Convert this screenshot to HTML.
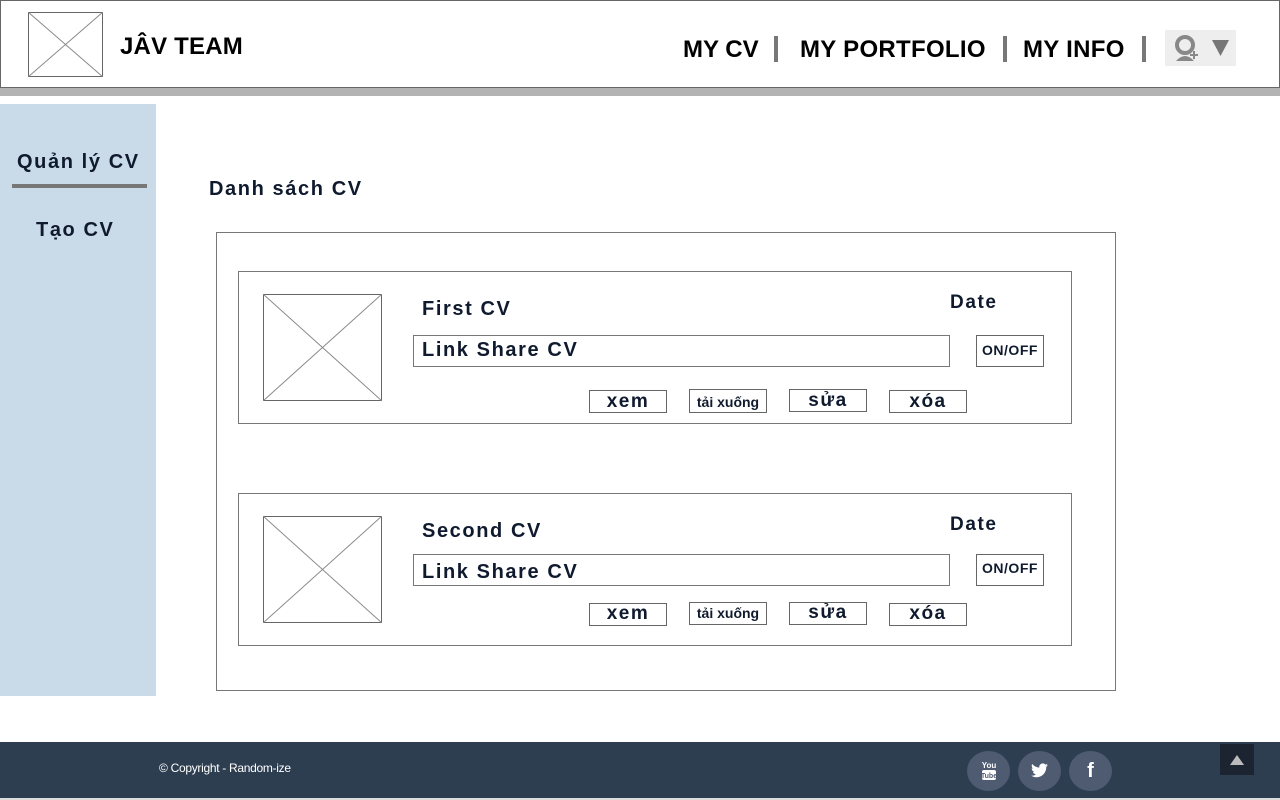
<!DOCTYPE html>
<html><head><meta charset="utf-8"><style>
*{margin:0;padding:0;box-sizing:border-box}
body{width:1280px;height:800px;position:relative;background:#fff;font-family:"Liberation Sans",sans-serif;overflow:hidden;color:#0f1a2e}
.a{position:absolute}
.hdr{left:0;top:0;width:1280px;height:88px;border:1px solid #666;background:#fff}
.bar{left:0;top:88px;width:1280px;height:8px;background:#b3b3b3}
.nav{font-weight:bold;font-size:24px;color:#000;top:36px}
.sep{width:4px;height:26px;background:#777;top:36px}
.side{left:0;top:104px;width:156px;height:592px;background:#c9dae8}
.t{font-weight:bold;letter-spacing:1.6px;color:#0f1a2e}
.box{border:1px solid #777}
.btn{border:1px solid #666;font-weight:bold;text-align:center;color:#0f1a2e}
.soc{width:43px;height:40px;border-radius:50%;background:#4f5b70;top:751px}
</style></head><body>
<div class="a hdr"></div>
<div class="a bar"></div>
<svg class="a" style="left:28px;top:12px" width="75" height="65"><rect x="0.5" y="0.5" width="74" height="64" fill="#fff" stroke="#666"/><line x1="0" y1="0" x2="75" y2="65" stroke="#888"/><line x1="75" y1="0" x2="0" y2="65" stroke="#888"/></svg>
<div class="a" style="left:120px;top:33px;font-weight:bold;font-size:24px;color:#000;letter-spacing:.2px">JÂV TEAM</div>
<div class="a nav" style="left:683px">MY CV</div>
<div class="a sep" style="left:774px"></div>
<div class="a nav" style="left:800px;letter-spacing:.3px">MY PORTFOLIO</div>
<div class="a sep" style="left:1003px"></div>
<div class="a nav" style="left:1023px;letter-spacing:.3px">MY INFO</div>
<div class="a sep" style="left:1142px"></div>
<div class="a" style="left:1165px;top:30px;width:71px;height:36px;background:#eee"></div>
<svg class="a" style="left:1170px;top:33px" width="66" height="30"><circle cx="15" cy="12" r="8" fill="none" stroke="#888" stroke-width="4"/><path d="M6 28 Q15 18 24 28Z" fill="#888"/><path d="M20 22h8M24 18v8" stroke="#888" stroke-width="2"/><path d="M42 7h17l-8.5 16z" fill="#777"/></svg>
<div class="a side"></div>
<div class="a t" style="left:17px;top:151px;font-size:20px">Quản lý CV</div>
<div class="a" style="left:12px;top:184px;width:135px;height:4px;background:#777"></div>
<div class="a t" style="left:36px;top:219px;font-size:20px">Tạo CV</div>
<div class="a t" style="left:209px;top:178px;font-size:20px">Danh sách CV</div>
<div class="a box" style="left:216px;top:232px;width:900px;height:459px"></div>

<div class="a box" style="left:238px;top:271px;width:834px;height:153px"></div>
<svg class="a" style="left:263px;top:294px" width="119" height="107"><rect x="0.5" y="0.5" width="118" height="106" fill="#fff" stroke="#666"/><line x1="0" y1="0" x2="119" y2="107" stroke="#888"/><line x1="119" y1="0" x2="0" y2="107" stroke="#888"/></svg>
<div class="a t" style="left:422px;top:298px;font-size:20px">First CV</div>
<div class="a t" style="left:950px;top:292px;font-size:19px">Date</div>
<div class="a box" style="left:413px;top:335px;width:537px;height:32px"></div>
<div class="a t" style="left:422px;top:339px;font-size:20px">Link Share CV</div>
<div class="a btn" style="left:976px;top:335px;width:68px;height:32px;font-size:14px;line-height:28px;letter-spacing:.5px">ON/OFF</div>
<div class="a btn" style="left:589px;top:390px;width:78px;height:23px;font-size:19px;line-height:22px;letter-spacing:1.5px">xem</div>
<div class="a btn" style="left:689px;top:389px;width:78px;height:24px;font-size:14px;line-height:24px">tải xuống</div>
<div class="a btn" style="left:789px;top:389px;width:78px;height:23px;font-size:19px;line-height:22px;letter-spacing:1.5px">sửa</div>
<div class="a btn" style="left:889px;top:390px;width:78px;height:23px;font-size:19px;line-height:22px;letter-spacing:1.5px">xóa</div>

<div class="a box" style="left:238px;top:493px;width:834px;height:153px"></div>
<svg class="a" style="left:263px;top:516px" width="119" height="107"><rect x="0.5" y="0.5" width="118" height="106" fill="#fff" stroke="#666"/><line x1="0" y1="0" x2="119" y2="107" stroke="#888"/><line x1="119" y1="0" x2="0" y2="107" stroke="#888"/></svg>
<div class="a t" style="left:422px;top:520px;font-size:20px">Second CV</div>
<div class="a t" style="left:950px;top:514px;font-size:19px">Date</div>
<div class="a box" style="left:413px;top:554px;width:537px;height:32px"></div>
<div class="a t" style="left:422px;top:561px;font-size:20px">Link Share CV</div>
<div class="a btn" style="left:976px;top:554px;width:68px;height:32px;font-size:14px;line-height:26px;letter-spacing:.5px">ON/OFF</div>
<div class="a btn" style="left:589px;top:603px;width:78px;height:23px;font-size:19px;line-height:20px;letter-spacing:1.5px">xem</div>
<div class="a btn" style="left:689px;top:602px;width:78px;height:23px;font-size:14px;line-height:21px">tải xuống</div>
<div class="a btn" style="left:789px;top:602px;width:78px;height:23px;font-size:19px;line-height:20px;letter-spacing:1.5px">sửa</div>
<div class="a btn" style="left:889px;top:603px;width:78px;height:23px;font-size:19px;line-height:20px;letter-spacing:1.5px">xóa</div>

<div class="a" style="left:0;top:742px;width:1280px;height:56px;background:#2e3e51"></div>
<div class="a" style="left:0;top:798px;width:1280px;height:2px;background:#ddd"></div>
<div class="a" style="left:159px;top:761px;color:#fff;font-size:12px;letter-spacing:-.3px">© Copyright - Random-ize</div>
<div class="a soc" style="left:967px"></div>
<svg class="a" style="left:980px;top:760px" width="18" height="22"><text x="9" y="8" font-size="8" font-weight="bold" fill="#fff" text-anchor="middle" font-family="Liberation Sans">You</text><rect x="2" y="10" width="14" height="10" rx="2" fill="#fff"/><text x="9" y="18" font-size="7" font-weight="bold" fill="#4f5b70" text-anchor="middle" font-family="Liberation Sans">Tube</text></svg>
<div class="a soc" style="left:1018px"></div>
<svg class="a" style="left:1031px;top:763px" width="17" height="15" viewBox="0 0 24 20"><path d="M24 2.4a10 10 0 0 1-2.8.8A5 5 0 0 0 23.3.5a10 10 0 0 1-3.1 1.2A4.9 4.9 0 0 0 11.8 6 14 14 0 0 1 1.7.9a4.9 4.9 0 0 0 1.5 6.6 5 5 0 0 1-2.2-.6 4.9 4.9 0 0 0 3.9 4.9 5 5 0 0 1-2.2.1 4.9 4.9 0 0 0 4.6 3.4A9.900 9.900 0 0 1 0 17.3 14 14 0 0 0 7.5 19.5c9 0 14-7.5 14-14v-.6A10 10 0 0 0 24 2.4z" fill="#fff"/></svg>
<div class="a soc" style="left:1069px;color:#fff;font-size:20px;text-align:center;line-height:40px;font-weight:bold">f</div>
<div class="a" style="left:1220px;top:744px;width:34px;height:31px;background:#1c2431"></div>
<svg class="a" style="left:1229px;top:754px" width="16" height="12"><path d="M1 11h14L8 1z" fill="#bbb"/></svg>
</body></html>
